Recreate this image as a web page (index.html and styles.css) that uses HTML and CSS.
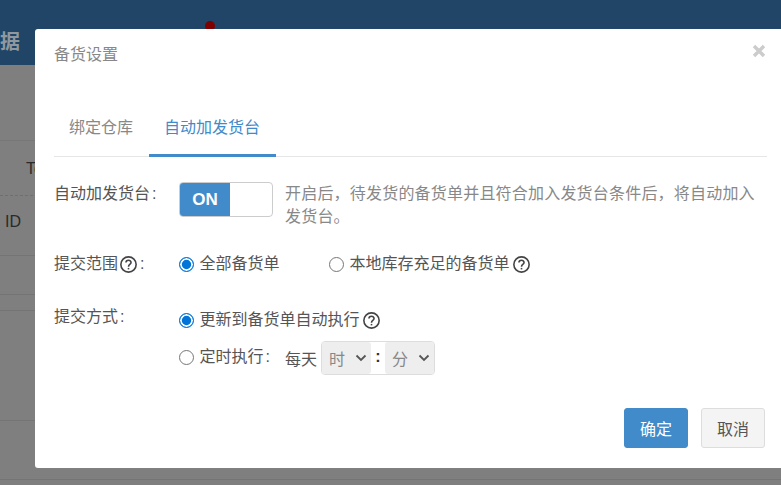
FILE: index.html
```html
<!DOCTYPE html>
<html>
<head>
  <title>备货设置</title>
  <link rel="stylesheet" href="styles.css">
</head>
<body>

<div class="page">
  <div class="topbar">
    <span class="topbar-title">数据</span>
    <span class="topbar-dot"></span>
  </div>
  <div class="page-gap"></div>
  <div class="page-row row-head"><span class="cell-t">To</span></div>
  <div class="page-row row-id"><span class="cell-id">ID</span></div>
  <div class="page-row row-a"></div>
  <div class="page-row row-b"></div>
  <div class="page-row row-c"></div>
  <div class="page-row row-d"></div>
</div>

<div class="modal">
  <div class="modal-head">
    <div class="modal-title">备货设置</div>
    <svg class="modal-close" viewBox="0 0 14 14"><path d="M2 2 L12 12 M12 2 L2 12"/></svg>
  </div>

  <div class="tabs">
    <div class="tab">绑定仓库</div>
    <div class="tab tab-active">自动加发货台</div>
  </div>

  <div class="form-row row-switch">
    <div class="form-label">自动加发货台<span class="colon">:</span></div>
    <div class="switch">
      <div class="switch-on">ON</div>
    </div>
    <div class="switch-tip">开启后，待发货的备货单并且符合加入发货台条件后，将自动加入发货台。</div>
  </div>

  <div class="form-row row-range">
    <div class="form-label">提交范围<svg class="help" viewBox="0 0 16 16"><circle cx="8" cy="8" r="7.2"/><path d="M5.6 6.2 C5.6 3.2 10.4 3.2 10.4 6.2 C10.4 8 8 8 8 10"/><path d="M8 11.2 V12.6"/></svg><span class="colon">:</span></div>
    <label class="radio radio-first"><span class="dot dot-on"></span>全部备货单</label>
    <label class="radio"><span class="dot"></span>本地库存充足的备货单<svg class="help" viewBox="0 0 16 16"><circle cx="8" cy="8" r="7.2"/><path d="M5.6 6.2 C5.6 3.2 10.4 3.2 10.4 6.2 C10.4 8 8 8 8 10"/><path d="M8 11.2 V12.6"/></svg></label>
  </div>

  <div class="form-row row-mode">
    <div class="form-label">提交方式<span class="colon">:</span></div>
    <div class="mode-list">
      <label class="radio"><span class="dot dot-on"></span>更新到备货单自动执行<svg class="help" viewBox="0 0 16 16"><circle cx="8" cy="8" r="7.2"/><path d="M5.6 6.2 C5.6 3.2 10.4 3.2 10.4 6.2 C10.4 8 8 8 8 10"/><path d="M8 11.2 V12.6"/></svg></label>
      <div class="timed">
        <label class="radio radio-timed"><span class="dot"></span>定时执行<span class="colon">:</span></label>
        <span class="every">每天</span>
        <div class="time-box">
          <div class="time-part">时<svg class="caret" viewBox="0 0 12 8"><path d="M1.5 1.5 L6 6 L10.5 1.5"/></svg></div>
          <div class="time-sep">:</div>
          <div class="time-part">分<svg class="caret" viewBox="0 0 12 8"><path d="M1.5 1.5 L6 6 L10.5 1.5"/></svg></div>
        </div>
      </div>
    </div>
  </div>

  <div class="modal-foot">
    <button class="btn btn-primary">确定</button>
    <button class="btn">取消</button>
  </div>
</div>

</body>
</html>
```

FILE: styles.css
```css
html, body { margin: 0; height: 100%; overflow: hidden; }
body {
  font-family: "Liberation Sans", "Noto Sans CJK SC", sans-serif;
  font-size: 16px;
  color: #555;
  background-color: #7f7f7f;
}

/* page behind the dialog */
.page { height: 485px; overflow: hidden; }
.topbar {
  height: 65px;
  background-color: #204566;
  display: flex;
  align-items: center;
  position: relative;
  overflow: hidden;
}
.topbar-title {
  font-size: 20px;
  font-weight: bold;
  color: #8f989f;
  margin-left: -20px;
  margin-top: 16px;
}
.topbar-dot {
  position: absolute;
  left: 205px;
  top: 21px;
  width: 10px;
  height: 10px;
  border-radius: 50%;
  background-color: #7f0000;
}
.page-gap { height: 75px; border-bottom: 1px solid #777; }
.page-row { border-bottom: 1px solid #747474; box-sizing: border-box; color: #2a2a2a; }
.row-head { height: 55px; line-height: 56px; border-bottom: 1px dashed #6f6f6f; padding-left: 26px; }
.row-id { height: 60px; line-height: 52px; padding-left: 5px; }
.row-a { height: 39px; }
.row-b { height: 16px; }
.row-c { height: 110px; }
.row-d { height: 59px; }

/* dialog */
.modal {
  position: absolute;
  left: 35px;
  top: 29px;
  width: 750px;
  height: 439px;
  box-sizing: border-box;
  padding: 0 18px 0 19px;
  background-color: #fff;
  border-radius: 3px;
  display: flex;
  flex-direction: column;
}
.modal-head { height: 52px; display: flex; justify-content: space-between; align-items: flex-start; }
.modal-title { margin-top: 17px; color: #888; line-height: 18px; }
.modal-close {
  width: 14px;
  height: 14px;
  margin: 15px 1px 0 0;
  fill: none;
  stroke: #ccc;
  stroke-width: 3.4;
}

.tabs { display: flex; height: 76px; box-sizing: border-box; padding-top: 23px; border-bottom: 1px solid #e6e6e6; }
.tab {
  height: 53px;
  box-sizing: border-box;
  padding: 0 15px;
  margin-right: 1px;
  line-height: 47px;
  color: #888;
}
.tab-active { padding-right: 16px; color: #428bca; border-bottom: 3px solid #428bca; }

.form-row { display: flex; align-items: flex-start; }
.form-label { width: 125px; flex: none; display: flex; align-items: center; line-height: 20px; color: #555; }
.colon { margin-left: 2px; }
.row-switch { margin-top: 25px; }
.row-switch .form-label { margin-top: 2px; }
.switch {
  width: 94px;
  height: 35px;
  box-sizing: border-box;
  border: 1px solid #ccc;
  border-radius: 4px;
  overflow: hidden;
  flex: none;
}
.switch-on {
  width: 50px;
  height: 100%;
  background-color: #428bca;
  color: #fff;
  font-size: 17px;
  font-weight: bold;
  line-height: 33px;
  text-align: center;
}
.switch-tip { margin-left: 12px; width: 478px; letter-spacing: 0.2px; line-height: 23px; color: #888; }

.row-range { margin-top: 26px; }
.row-range .radio-first { width: 150px; }
.row-mode { margin-top: 36px; }
.row-mode .form-label { margin-top: -3px; }

.radio { display: flex; align-items: center; line-height: 20px; color: #555; }
.radio-timed { margin-top: -2px; }
.dot {
  width: 15px;
  height: 15px;
  box-sizing: border-box;
  border: 1.5px solid #767676;
  border-radius: 50%;
  margin-right: 5.5px;
  background-color: #fff;
  flex: none;
}
.dot-on { border: 1.5px solid #0075d9; background-color: #0075d9; box-shadow: inset 0 0 0 1.8px #fff; }

.help {
  width: 17px;
  height: 17px;
  margin: 0 1px 0 2px;
  fill: none;
  stroke: #444;
  stroke-width: 1.5;
  flex: none;
}
.radio .help { margin-left: 3px; }

.mode-list { display: flex; flex-direction: column; }
.timed { display: flex; align-items: center; margin-top: 11px; }
.every { margin-left: 15px; margin-right: 4px; }
.time-box {
  display: flex;
  height: 34px;
  box-sizing: border-box;
  border: 1px solid #ddd;
  border-radius: 4px;
  background-color: #fff;
}
.time-part {
  width: 49px;
  box-sizing: border-box;
  padding: 0 4px 0 7px;
  background-color: #eee;
  border-radius: 3px;
  color: #888;
  display: flex;
  align-items: center;
  justify-content: space-between;
}
.time-sep { width: 14px; text-align: center; line-height: 30px; font-weight: bold; color: #333; }
.caret { width: 12px; height: 8px; fill: none; stroke: #555; stroke-width: 1.8; }

.modal-foot { margin-top: auto; margin-bottom: 20px; display: flex; justify-content: flex-end; gap: 13px; padding-right: 2px; }
.btn {
  width: 64px;
  height: 40px;
  padding: 0;
  border: 1px solid #ddd;
  border-radius: 3px;
  background-color: #f4f4f4;
  color: #555;
  font-family: inherit;
  font-size: 16px;
}
.btn-primary { background-color: #428bca; border-color: #428bca; color: #fff; }
```
